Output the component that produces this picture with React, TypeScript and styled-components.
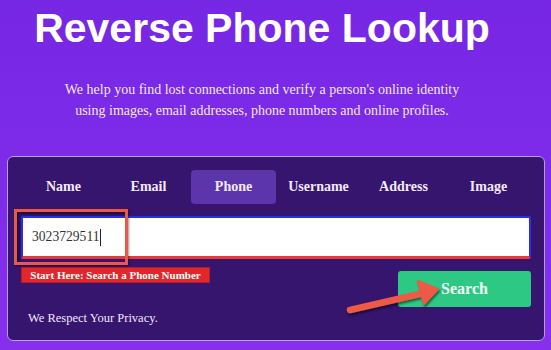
import React from "react";
import styled, { createGlobalStyle } from "styled-components";

const GlobalStyle = createGlobalStyle`
  html, body {
    margin: 0;
    padding: 0;
  }
  body {
    background: linear-gradient(180deg, #7627e4 0%, #8630ee 100%);
    min-height: 350px;
    font-family: "Liberation Serif", "Times New Roman", serif;
    overflow: hidden;
  }
`;

const Page = styled.div`
  width: 551px;
  height: 350px;
  box-sizing: border-box;
  padding-top: 5px;
`;

const Header = styled.header`
  padding-right: 27px;
  text-align: center;
`;

const Title = styled.h1`
  margin: 0;
  font-family: "Liberation Sans", Arial, sans-serif;
  font-weight: 700;
  font-size: 41px;
  line-height: 47px;
  color: #ffffff;
`;

const Intro = styled.p`
  margin: 27px 0 0 0;
  font-size: 14px;
  line-height: 21px;
  color: #f1e8ff;
`;

const Panel = styled.section`
  position: relative;
  margin: 35px 6px 0 7px;
  padding: 13px;
  background: #35156d;
  border: 1px solid #b79de6;
  border-radius: 6px;
`;

const Tabs = styled.nav`
  display: grid;
  grid-template-columns: repeat(6, 1fr);
  height: 34px;
`;

const Tab = styled.div<{ $active?: boolean }>`
  display: flex;
  align-items: center;
  justify-content: center;
  font-weight: 700;
  font-size: 14px;
  color: #f3eaff;
  border-radius: 4px;
  background: ${(p) => (p.$active ? "#5c35aa" : "transparent")};
`;

const FieldWrap = styled.div`
  position: relative;
  margin-top: 12px;
`;

const Field = styled.div`
  display: flex;
  align-items: center;
  height: 43px;
  box-sizing: border-box;
  padding-left: 9px;
  background: #ffffff;
  border: 2px solid #2a2cf2;
  border-bottom: 3px solid #e53a3a;
  border-radius: 2px;
  font-size: 13.6px;
  color: #333333;
`;

const Caret = styled.span`
  display: inline-block;
  width: 1px;
  height: 17px;
  margin-left: 1px;
  background: #222222;
`;

const Highlight = styled.div`
  position: absolute;
  left: -7px;
  top: -7px;
  width: 114px;
  height: 56px;
  box-sizing: border-box;
  border: 3px solid #e8594c;
  box-shadow: inset 2px 2px 3px rgba(0, 0, 0, 0.55), 1px 1px 2px rgba(0, 0, 0, 0.4);
  pointer-events: none;
`;

const BottomRow = styled.div`
  display: flex;
  justify-content: space-between;
  align-items: flex-start;
  margin-top: 8px;
`;

const LeftCol = styled.div`
  display: flex;
  flex-direction: column;
`;

const StartLabel = styled.div`
  width: 189px;
  height: 16px;
  box-sizing: border-box;
  display: flex;
  align-items: center;
  justify-content: center;
  background: #e0272b;
  border: 1px solid #b81c22;
  font-weight: 700;
  font-size: 11px;
  color: #ffffff;
`;

const Privacy = styled.p`
  margin: 26px 0 0 7px;
  font-size: 12.5px;
  line-height: 18px;
  color: #f1e8ff;
`;

const SearchButton = styled.button`
  margin-top: 4px;
  width: 133px;
  height: 36px;
  border: none;
  border-radius: 3px;
  background: #2dc884;
  font-family: "Liberation Serif", "Times New Roman", serif;
  font-weight: 700;
  font-size: 16px;
  color: #f4fff8;
`;

const Arrow = styled.svg`
  position: absolute;
  left: 332px;
  top: 120px;
  pointer-events: none;
`;

const tabs = ["Name", "Email", "Phone", "Username", "Address", "Image"];

export default function App() {
  return (
    <Page>
      <GlobalStyle />
      <Header>
        <Title>Reverse Phone Lookup</Title>
        <Intro>
          We help you find lost connections and verify a person's online identity
          <br />
          using images, email addresses, phone numbers and online profiles.
        </Intro>
      </Header>

      <Panel>
        <Tabs>
          {tabs.map((t) => (
            <Tab key={t} $active={t === "Phone"}>
              {t}
            </Tab>
          ))}
        </Tabs>

        <FieldWrap>
          <Field>
            3023729511
            <Caret />
          </Field>
          <Highlight />
        </FieldWrap>

        <BottomRow>
          <LeftCol>
            <StartLabel>Start Here: Search a Phone Number</StartLabel>
            <Privacy>We Respect Your Privacy.</Privacy>
          </LeftCol>
          <SearchButton>Search</SearchButton>
        </BottomRow>

        {/* annotation arrow pointing at the button */}
        <Arrow width="110" height="44" viewBox="0 0 110 44">
          <defs>
            <filter id="sh" x="-20%" y="-40%" width="140%" height="180%">
              <feDropShadow dx="1" dy="2" stdDeviation="1.2" floodColor="#000" floodOpacity="0.55" />
            </filter>
          </defs>
          <g filter="url(#sh)">
            <line x1="10" y1="33" x2="84" y2="16" stroke="#ee5a45" strokeWidth="6.5" strokeLinecap="round" />
            <polygon points="98,12 78,4 84,27" fill="#ee5a45" strokeLinejoin="round" stroke="#ee5a45" strokeWidth="2" />
          </g>
        </Arrow>
      </Panel>
    </Page>
  );
}
